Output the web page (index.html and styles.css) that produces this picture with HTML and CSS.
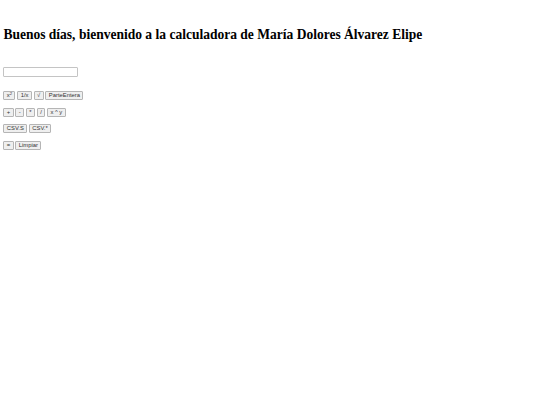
FILE: index.html
```html
<!DOCTYPE html>
<html lang="es">
<head>
<meta charset="utf-8">
<title>Calculadora</title>
<link rel="stylesheet" href="styles.css">
</head>
<body>
<h1 class="title">Buenos días, bienvenido a la calculadora de María Dolores Álvarez Elipe</h1>
<input class="display" type="text">
<div class="pad">
  <div class="row">
    <button class="key">x<sup>2</sup></button>
    <button class="key">1/x</button>
    <button class="key">√</button>
    <button class="key">ParteEntera</button>
  </div>
  <div class="row">
    <button class="key">+</button>
    <button class="key">-</button>
    <button class="key">*</button>
    <button class="key">/</button>
    <button class="key">x ^ y</button>
  </div>
  <div class="row">
    <button class="key">CSV.S</button>
    <button class="key">CSV.*</button>
  </div>
  <div class="row">
    <button class="key">=</button>
    <button class="key">Limpiar</button>
  </div>
</div>
</body>
</html>
```

FILE: styles.css
```css
html, body {
  background: #ffffff;
}
body {
  margin: 0 3.4px;
  padding-top: 1px;
  font-family: "Liberation Serif", serif;
  font-size: 6.7px;
  color: #000000;
}
.title {
  font-size: 13.52px;
  font-weight: bold;
  margin: 26px 0 24.7px 0;
  line-height: 15px;
}
.display {
  display: block;
  box-sizing: border-box;
  width: 75px;
  height: 10px;
  margin: 0;
  padding: 0;
  border: 1px solid #c4c4c4;
  border-radius: 1px;
  background: #ffffff;
}
.pad {
  display: flex;
  flex-direction: column;
  gap: 7.5px;
  margin-top: 14.8px;
}
.row {
  display: flex;
  gap: 1.8px;
}
.key {
  box-sizing: border-box;
  height: 9px;
  margin: 0;
  padding: 0 2.4px;
  font-family: "Liberation Sans", Arial, sans-serif;
  font-size: 5.85px;
  line-height: 7px;
  color: #333333;
  background: #efefef;
  border: 1px solid #b5b5b5;
  border-radius: 1px;
  appearance: none;
}
.key sup {
  font-size: 4.2px;
  line-height: 0;
  vertical-align: 2.3px;
}
```
